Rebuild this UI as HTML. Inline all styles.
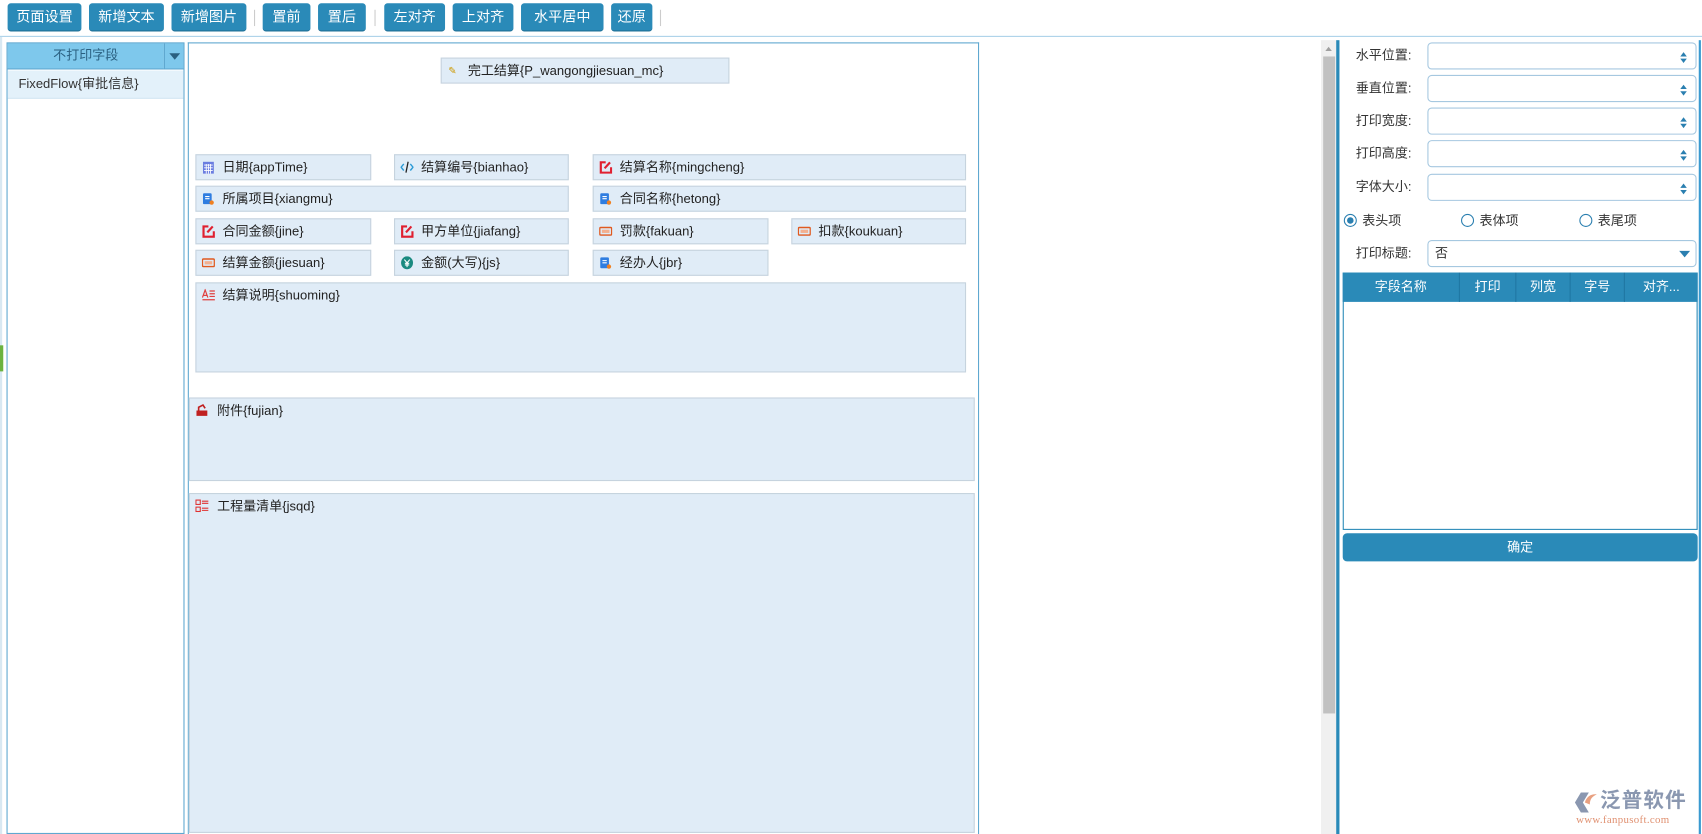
<!DOCTYPE html>
<html><head><meta charset="utf-8"><style>
*{box-sizing:border-box;margin:0;padding:0}
html,body{width:1702px;height:834px;overflow:hidden;background:#fff}
#w{position:absolute;left:0;top:0;width:1568px;height:768px;transform:scale(1.08546,1.08594);transform-origin:0 0;font-family:"Liberation Sans","Noto Sans CJK SC",sans-serif;font-size:12px;color:#333}
.a{position:absolute}
.btn{position:absolute;top:3px;height:26px;background:#2a8ab8;color:#fff;border-radius:3px;font-size:13px;line-height:26px;text-align:center;border-bottom:1px solid #1f6f96}
.sep{position:absolute;top:9px;width:1px;height:15px;background:#ccc}
.bx{position:absolute;background:#e0ecf7;border:1px solid #c6d3de;font-size:12px;line-height:22px;padding-left:24px;color:#222}
.ic{position:absolute;left:5px;top:5px;width:12px;height:12px}
.lab{position:absolute;left:1249px;font-size:12px;color:#333}
.inp{position:absolute;left:1315px;width:248px;height:25px;border:1px solid #a6c8e0;border-radius:4px;background:#fff}
.inp:after{content:"";position:absolute;right:8px;top:5px;border:3px solid transparent;border-bottom:4px solid #2a7fb0}
.inp:before{content:"";position:absolute;right:8px;top:14px;border:3px solid transparent;border-top:4px solid #2a7fb0}
.rad{position:absolute;top:197px;width:12px;height:12px;border:1px solid #2a7fb0;border-radius:50%}
.th{position:absolute;top:251px;height:27px;line-height:27px;color:#fff;text-align:center;font-size:12px;border-right:1px solid #1f77a3}
</style></head><body><div id="w">
<div class="btn" style="left:7px;width:68px">页面设置</div>
<div class="btn" style="left:82px;width:69px">新增文本</div>
<div class="btn" style="left:158px;width:69px">新增图片</div>
<div class="sep" style="left:234px"></div>
<div class="btn" style="left:242px;width:44px">置前</div>
<div class="btn" style="left:293px;width:44px">置后</div>
<div class="sep" style="left:345px"></div>
<div class="btn" style="left:354px;width:56px">左对齐</div>
<div class="btn" style="left:417px;width:56px">上对齐</div>
<div class="btn" style="left:480px;width:76px">水平居中</div>
<div class="btn" style="left:563px;width:38px">还原</div>
<div class="sep" style="left:608px"></div>
<div class="a" style="left:0;top:33px;width:1568px;height:1px;background:#a9d0e8"></div>
<div class="a" style="left:0;top:34px;width:2px;height:734px;background:#d8e8f2"></div>
<div class="a" style="left:0;top:318px;width:3px;height:24px;background:#6cb33f"></div>
<!-- left panel -->
<div class="a" style="left:6px;top:39px;width:164px;height:729px;border:1px solid #5fa8d0;background:#fff"></div>
<div class="a" style="left:7px;top:40px;width:144px;height:24px;background:#7ec8ec;color:#2a5f80;text-align:center;line-height:22px;font-size:12px;border-bottom:1px solid #5fa8d0">不打印字段</div>
<div class="a" style="left:151px;top:40px;width:18px;height:24px;background:#7ec8ec;border-left:1px solid #5fa8d0;border-bottom:1px solid #5fa8d0"><div class="a" style="left:4px;top:9px;border:5px solid transparent;border-top:6px solid #2a6080"></div></div>
<div class="a" style="left:7px;top:65px;width:162px;height:26px;background:#e3f1fa;border-bottom:1px solid #d4e6f2;line-height:25px;padding-left:10px;font-size:12px;color:#333">FixedFlow{审批信息}</div>
<!-- canvas -->
<div class="a" style="left:173px;top:39px;width:729px;height:729px;border:1px solid #5fa8d0;border-bottom:0"></div>
<div class="bx" style="left:406px;top:53px;width:266px;height:24px"><span class="ic" style="left:6px;color:#c90;font-size:9px;top:0">✎</span>完工结算{P_wangongjiesuan_mc}</div>
<div class="bx" style="left:180px;top:142px;width:162px;height:24px"><svg class="ic" viewBox="0 0 12 12"><rect x="1" y="1" width="10" height="11" fill="#6a7de0"/><path d="M2 4h8M2 6.5h8M2 9h8M4 3v9M6 3v9M8 3v9" stroke="#fff" stroke-width=".8"/></svg>日期{appTime}</div>
<div class="bx" style="left:363px;top:142px;width:161px;height:24px"><svg class="ic" viewBox="0 0 12 12"><path d="M3 3L0.5 6 3 9M9 3l2.5 3L9 9" stroke="#2a9ad6" fill="none" stroke-width="1.3"/><path d="M7 1L5 11" stroke="#222" stroke-width="1.2"/></svg>结算编号{bianhao}</div>
<div class="bx" style="left:546px;top:142px;width:344px;height:24px"><svg class="ic" viewBox="0 0 12 12"><path d="M6 1.5H1.5v9.5h9.5V6" stroke="#e02030" fill="none" stroke-width="2"/><path d="M5 7l5-5.5" stroke="#e02030" stroke-width="2"/></svg>结算名称{mingcheng}</div>
<div class="bx" style="left:180px;top:171px;width:344px;height:24px"><svg class="ic" viewBox="0 0 12 12"><rect x="1" y="1" width="8" height="10" rx="1" fill="#2f7de0"/><path d="M3 4h4M3 6h4" stroke="#fff"/><circle cx="9" cy="9.5" r="2" fill="#f08020"/></svg>所属项目{xiangmu}</div>
<div class="bx" style="left:546px;top:171px;width:344px;height:24px"><svg class="ic" viewBox="0 0 12 12"><rect x="1" y="1" width="8" height="10" rx="1" fill="#2f7de0"/><path d="M3 4h4M3 6h4" stroke="#fff"/><circle cx="9" cy="9.5" r="2" fill="#f08020"/></svg>合同名称{hetong}</div>
<div class="bx" style="left:180px;top:201px;width:162px;height:24px"><svg class="ic" viewBox="0 0 12 12"><path d="M6 1.5H1.5v9.5h9.5V6" stroke="#e02030" fill="none" stroke-width="2"/><path d="M5 7l5-5.5" stroke="#e02030" stroke-width="2"/></svg>合同金额{jine}</div>
<div class="bx" style="left:363px;top:201px;width:161px;height:24px"><svg class="ic" viewBox="0 0 12 12"><path d="M6 1.5H1.5v9.5h9.5V6" stroke="#e02030" fill="none" stroke-width="2"/><path d="M5 7l5-5.5" stroke="#e02030" stroke-width="2"/></svg>甲方单位{jiafang}</div>
<div class="bx" style="left:546px;top:201px;width:162px;height:24px"><svg class="ic" viewBox="0 0 12 12"><rect x="0.5" y="2.5" width="11" height="7" rx="1" fill="none" stroke="#e05a20" stroke-width="1.3"/><rect x="2.5" y="4.5" width="7" height="3" fill="#f3b090"/></svg>罚款{fakuan}</div>
<div class="bx" style="left:729px;top:201px;width:161px;height:24px"><svg class="ic" viewBox="0 0 12 12"><rect x="0.5" y="2.5" width="11" height="7" rx="1" fill="none" stroke="#e05a20" stroke-width="1.3"/><rect x="2.5" y="4.5" width="7" height="3" fill="#f3b090"/></svg>扣款{koukuan}</div>
<div class="bx" style="left:180px;top:230px;width:162px;height:24px"><svg class="ic" viewBox="0 0 12 12"><rect x="0.5" y="2.5" width="11" height="7" rx="1" fill="none" stroke="#e05a20" stroke-width="1.3"/><rect x="2.5" y="4.5" width="7" height="3" fill="#f3b090"/></svg>结算金额{jiesuan}</div>
<div class="bx" style="left:363px;top:230px;width:161px;height:24px"><svg class="ic" viewBox="0 0 12 12"><ellipse cx="6" cy="6" rx="5.5" ry="6" fill="#1a8a80"/><path d="M3.5 3L6 6l2.5-3M6 6v4M4 6.5h4M4 8h4" stroke="#fff" fill="none"/></svg>金额(大写){js}</div>
<div class="bx" style="left:546px;top:230px;width:162px;height:24px"><svg class="ic" viewBox="0 0 12 12"><rect x="1" y="1" width="8" height="10" rx="1" fill="#2f7de0"/><path d="M3 4h4M3 6h4" stroke="#fff"/><circle cx="9" cy="9.5" r="2" fill="#f08020"/></svg>经办人{jbr}</div>
<div class="bx" style="left:180px;top:260px;width:710px;height:83px"><svg class="ic" viewBox="0 0 12 12"><path d="M0.5 8L3 1l2.5 7M1.5 6h3M7 2h5M7 4.5h5M7 7h5M0.5 10h11.5" stroke="#e04040" fill="none" stroke-width="1.1"/></svg>结算说明{shuoming}</div>
<div class="bx" style="left:174px;top:366px;width:724px;height:77px;padding-left:25px"><svg class="ic" viewBox="0 0 12 12"><path d="M1 6h10v5H1z" fill="#c02020"/><path d="M3 6V3l4-2 2 3" stroke="#c02020" fill="none" stroke-width="1.5"/></svg>附件{fujian}</div>
<div class="bx" style="left:174px;top:454px;width:724px;height:313px;padding-left:25px"><svg class="ic" viewBox="0 0 12 12"><rect x="0.5" y="0.5" width="4" height="4" fill="none" stroke="#e03030"/><rect x="0.5" y="7" width="4" height="4" fill="none" stroke="#e03030"/><path d="M6 1.5h6M6 3.5h6M6 8h6M6 10h6" stroke="#e03030"/></svg>工程量清单{jsqd}</div>
<!-- scrollbar -->
<div class="a" style="left:1217px;top:37px;width:14px;height:731px;background:#f0f0f0"></div>
<div class="a" style="left:1219px;top:52px;width:11px;height:605px;background:#c1c1c1"></div>
<div class="a" style="left:1221px;top:40px;border:3px solid transparent;border-bottom:4px solid #a0a0a0"></div>
<!-- right panel -->
<div class="a" style="left:1231px;top:37px;width:3px;height:731px;background:#2a8ab8"></div>
<div class="a" style="left:1565px;top:37px;width:2px;height:731px;background:#3a9ad0"></div>
<div class="lab" style="top:42px">水平位置:</div><div class="inp" style="top:39px"></div>
<div class="lab" style="top:72px">垂直位置:</div><div class="inp" style="top:69px"></div>
<div class="lab" style="top:102px">打印宽度:</div><div class="inp" style="top:99px"></div>
<div class="lab" style="top:132px">打印高度:</div><div class="inp" style="top:129px"></div>
<div class="lab" style="top:163px">字体大小:</div><div class="inp" style="top:160px"></div>
<div class="rad" style="left:1238px"><div class="a" style="left:2px;top:2px;width:6px;height:6px;border-radius:50%;background:#2a7fb0"></div></div>
<div class="a" style="left:1255px;top:194px">表头项</div>
<div class="rad" style="left:1346px"></div><div class="a" style="left:1363px;top:194px">表体项</div>
<div class="rad" style="left:1455px"></div><div class="a" style="left:1472px;top:194px">表尾项</div>
<div class="lab" style="top:224px">打印标题:</div>
<div class="a" style="left:1315px;top:221px;width:248px;height:25px;border:1px solid #a6c8e0;border-radius:4px;padding-left:6px;line-height:23px">否<div class="a" style="right:5px;top:9px;border:5px solid transparent;border-top:6px solid #2a7fb0"></div></div>
<div class="a" style="left:1237px;top:251px;width:327px;height:237px;border:1px solid #2a8ab8"></div>
<div class="a" style="left:1237px;top:251px;width:327px;height:27px;background:#2a8ab8"></div>
<div class="th" style="left:1237px;width:108px">字段名称</div>
<div class="th" style="left:1345px;width:52px">打印</div>
<div class="th" style="left:1397px;width:50px">列宽</div>
<div class="th" style="left:1447px;width:50px">字号</div>
<div class="th" style="left:1497px;width:67px;border:0">对齐...</div>
<div class="a" style="left:1237px;top:491px;width:327px;height:26px;background:#2a8ab8;border-radius:4px;color:#fff;text-align:center;line-height:26px;font-size:12px">确定</div>
<!-- logo -->
<svg class="a" style="left:1449px;top:728px" width="24" height="22" viewBox="0 0 26 24"><path d="M2 12L8 2h8L10 12l6 10H8z" fill="#8a97b0"/><path d="M12 12c2-7 8-9 12-8-5 2-7 5-7 10z" fill="#e8a080"/></svg>
<div class="a" style="left:1474px;top:727px;font-size:19px;line-height:22px;color:#8a97b0;font-weight:bold;letter-spacing:1px">泛普软件</div>
<div class="a" style="left:1452px;top:750px;font-size:10px;color:#e09070;font-family:'Liberation Serif',serif;letter-spacing:0.3px">www.fanpusoft.com</div>
</div></body></html>
